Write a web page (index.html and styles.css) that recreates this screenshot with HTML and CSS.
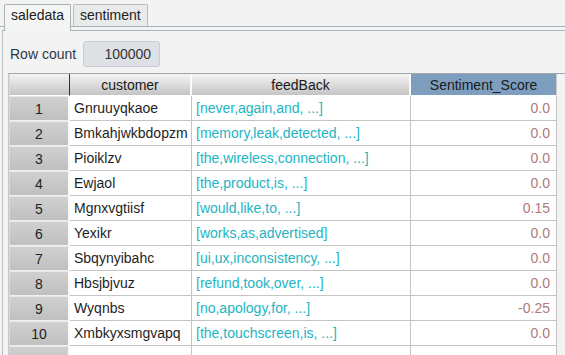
FILE: index.html
```html
<!DOCTYPE html>
<html lang="en">
<head>
    <meta charset="UTF-8">
    <title>saledata</title>
    <link rel="stylesheet" href="styles.css">
</head>
<body>
    <div class="tabs">
        <div class="tab active">saledata</div>
        <div class="tab">sentiment</div>
    </div>
    <div class="panel">
        <div class="rowCount">
            <span class="rowLabel">Row count</span>
            <div class="countBox">100000</div>
        </div>
        <div class="gridWrap">
            <table class="grid">
                <colgroup>
                    <col class="cNum">
                    <col class="cCust">
                    <col class="cFeed">
                    <col class="cScore">
                </colgroup>
                <thead>
                    <tr>
                        <th class="corner"></th>
                        <th>customer</th>
                        <th>feedBack</th>
                        <th class="picked">Sentiment_Score</th>
                    </tr>
                </thead>
                <tbody>
                    <tr><td class="num">1</td><td>Gnruuyqkaoe</td><td class="feed">[never,again,and, ...]</td><td class="score">0.0</td></tr>
                    <tr><td class="num">2</td><td>Bmkahjwkbdopzm</td><td class="feed">[memory,leak,detected, ...]</td><td class="score">0.0</td></tr>
                    <tr><td class="num">3</td><td>Pioiklzv</td><td class="feed">[the,wireless,connection, ...]</td><td class="score">0.0</td></tr>
                    <tr><td class="num">4</td><td>Ewjaol</td><td class="feed">[the,product,is, ...]</td><td class="score">0.0</td></tr>
                    <tr><td class="num">5</td><td>Mgnxvgtiisf</td><td class="feed">[would,like,to, ...]</td><td class="score">0.15</td></tr>
                    <tr><td class="num">6</td><td>Yexikr</td><td class="feed">[works,as,advertised]</td><td class="score">0.0</td></tr>
                    <tr><td class="num">7</td><td>Sbqynyibahc</td><td class="feed">[ui,ux,inconsistency, ...]</td><td class="score">0.0</td></tr>
                    <tr><td class="num">8</td><td>Hbsjbjvuz</td><td class="feed">[refund,took,over, ...]</td><td class="score">0.0</td></tr>
                    <tr><td class="num">9</td><td>Wyqnbs</td><td class="feed">[no,apology,for, ...]</td><td class="score">-0.25</td></tr>
                    <tr><td class="num">10</td><td>Xmbkyxsmgvapq</td><td class="feed">[the,touchscreen,is, ...]</td><td class="score">0.0</td></tr>
                    <tr><td class="num"></td><td></td><td class="feed"></td><td class="score"></td></tr>
                </tbody>
            </table>
        </div>
    </div>
</body>
</html>
```

FILE: styles.css
```css
body{
    margin: 0px;
    padding: 0px;
    background-color: #f2f3f2;
    font-family: "Liberation Sans", Arial, sans-serif;
    font-size: 14px;
    color: #1e1e1e;
    overflow: hidden;
    height: 355px;
}
.tabs{
    display: flex;
    padding: 4px 0px 0px 4px;
    height: 22px;
    border-bottom: 1px solid #a9b3b8;
    gap: 2px;
}
.tab{
    height: 21px;
    padding: 0px 6px;
    line-height: 21px;
    border: 1px solid #b7bfc3;
    border-bottom: none;
    background-color: #e9ebeb;
    border-radius: 2px 2px 0px 0px;
    color: #222;
}
.tab.active{
    background-color: #f4f5f5;
    height: 26px;
    position: relative;
    z-index: 1;
    border-color: #a9b3b8;
}
.panel{
    margin: 3px 0px 0px 2px;
    border-top: 1px solid #a9b3b8;
    border-left: 1px solid #b7bfc3;
    height: 330px;
}
.rowCount{
    display: flex;
    align-items: center;
    gap: 7px;
    padding: 10px 0px 0px 7px;
    height: 26px;
}
.rowLabel{
    color: #2c3a44;
}
.countBox{
    width: 67px;
    height: 24px;
    line-height: 24px;
    padding-right: 8px;
    text-align: right;
    background-color: #dde1e6;
    border: 1px solid #c9ced4;
    border-radius: 3px;
    color: #333;
}
.gridWrap{
    margin: 6px 0px 0px 5px;
    border-top: 1px solid #9ea6aa;
    border-left: 1px solid #c6c9cb;
    height: 290px;
    overflow: hidden;
}
.grid{
    border-collapse: separate;
    border-spacing: 0px;
    table-layout: fixed;
    width: 548px;
}
.cNum{ width: 61px; }
.cCust{ width: 122px; }
.cFeed{ width: 219px; }
.cScore{ width: 146px; }
.grid th{
    height: 21px;
    padding: 0px;
    font-weight: normal;
    text-align: center;
    background: linear-gradient(#f4f4f4, #c4c4c4);
    border-right: 2px solid #fafafa;
    border-bottom: 1px solid #ffffff;
    color: #1a1a1a;
}
.grid th.corner{
    border-right: 1px solid #333;
    border-left: 1px solid #d8d8d8;
}
.grid th.picked{
    background: #7d9ebf;
    border-right: 1px solid #c8c8c8;
}
.grid td{
    height: 24px;
    padding: 0px 4px;
    background-color: #fff;
    border-right: 1px solid #c4c4c4;
    border-bottom: 1px solid #c4c4c4;
    white-space: nowrap;
    overflow: hidden;
}
.grid td.num{
    text-align: center;
    background: linear-gradient(#d0d0d0, #c0c0c0);
    border-top: 1px solid #e8e8e8;
    border-bottom: 1px solid #f0f0f0;
    border-right: 2px solid #fafafa;
    border-left: 1px solid #d8d8d8;
    height: 22px;
}
.grid td.feed{
    color: #22b5c3;
}
.grid td.score{
    text-align: right;
    color: #b07a7a;
    padding-right: 6px;
}
```
